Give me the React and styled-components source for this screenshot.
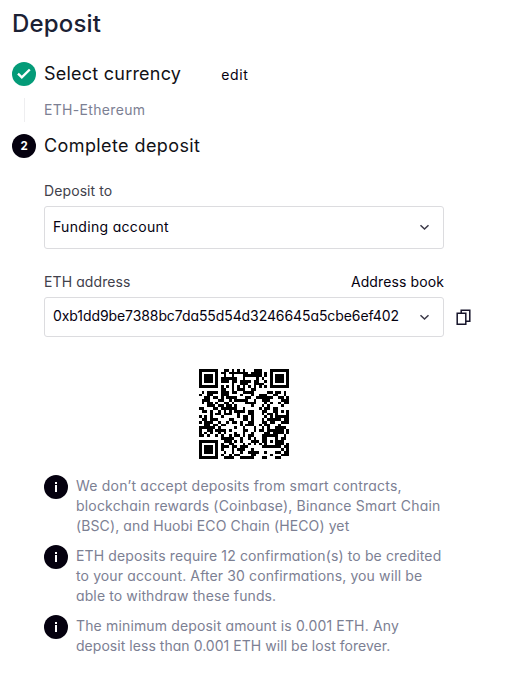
import React from 'react';
import styled, { createGlobalStyle } from 'styled-components';

const ADDRESS = '0xb1dd9be7388bc7da55d54d3246645a5cbe6ef402';

/* ---------- QR encoder: version 4, error correction level Q ---------- */

const SIZE = 33;
const BLOCKS = 2;
const DATA_PER_BLOCK = 24;
const EC_PER_BLOCK = 26;
const FORMAT_LEVEL_Q = 3;
const MASK = 6;

function gfMultiply(a, b) {
  let z = 0;
  for (let i = 7; i >= 0; i--) {
    z = (z << 1) ^ ((z >>> 7) * 0x11d);
    z ^= ((b >>> i) & 1) * a;
  }
  return z;
}

function generator(degree) {
  const poly = new Array(degree).fill(0);
  poly[degree - 1] = 1;
  let root = 1;
  for (let i = 0; i < degree; i++) {
    for (let j = 0; j < degree; j++) {
      poly[j] = gfMultiply(poly[j], root);
      if (j + 1 < degree) poly[j] ^= poly[j + 1];
    }
    root = gfMultiply(root, 2);
  }
  return poly;
}

function codewords(text) {
  const bits = [];
  const put = (v, n) => {
    for (let i = n - 1; i >= 0; i--) bits.push((v >> i) & 1);
  };
  put(4, 4);
  put(text.length, 8);
  for (const c of text) put(c.charCodeAt(0), 8);
  put(0, 4);
  while (bits.length % 8) bits.push(0);

  const data = [];
  for (let i = 0; i < bits.length; i += 8) data.push(parseInt(bits.slice(i, i + 8).join(''), 2));
  for (let pad = 0xec; data.length < BLOCKS * DATA_PER_BLOCK; pad ^= 0xec ^ 0x11) data.push(pad);

  const poly = generator(EC_PER_BLOCK);
  const dataBlocks = [];
  const ecBlocks = [];
  for (let b = 0; b < BLOCKS; b++) {
    const block = data.slice(b * DATA_PER_BLOCK, (b + 1) * DATA_PER_BLOCK);
    const rest = new Array(EC_PER_BLOCK).fill(0);
    for (const x of block) {
      const factor = x ^ rest.shift();
      rest.push(0);
      poly.forEach((c, i) => {
        rest[i] ^= gfMultiply(c, factor);
      });
    }
    dataBlocks.push(block);
    ecBlocks.push(rest);
  }
  const out = [];
  for (let i = 0; i < DATA_PER_BLOCK; i++) dataBlocks.forEach((b) => out.push(b[i]));
  for (let i = 0; i < EC_PER_BLOCK; i++) ecBlocks.forEach((b) => out.push(b[i]));
  return out;
}

function qrMatrix(text) {
  const words = codewords(text);
  const m = Array.from({ length: SIZE }, () => Array(SIZE).fill(0));
  const fixed = Array.from({ length: SIZE }, () => Array(SIZE).fill(false));
  const set = (x, y, v) => {
    if (x < 0 || y < 0 || x >= SIZE || y >= SIZE) return;
    m[y][x] = v ? 1 : 0;
    fixed[y][x] = true;
  };

  for (let i = 0; i < SIZE; i++) {
    set(6, i, i % 2 === 0);
    set(i, 6, i % 2 === 0);
  }
  for (const [cx, cy] of [[3, 3], [SIZE - 4, 3], [3, SIZE - 4]]) {
    for (let a = -4; a <= 4; a++) {
      for (let b = -4; b <= 4; b++) {
        const d = Math.max(Math.abs(a), Math.abs(b));
        set(cx + a, cy + b, d !== 2 && d !== 4);
      }
    }
  }
  for (let a = -2; a <= 2; a++) {
    for (let b = -2; b <= 2; b++) set(26 + a, 26 + b, Math.max(Math.abs(a), Math.abs(b)) !== 1);
  }

  const info = (FORMAT_LEVEL_Q << 3) | MASK;
  let rem = info;
  for (let i = 0; i < 10; i++) rem = (rem << 1) ^ ((rem >>> 9) * 0x537);
  const format = ((info << 10) | rem) ^ 0x5412;
  const bit = (i) => (format >>> i) & 1;
  for (let i = 0; i <= 5; i++) set(8, i, bit(i));
  set(8, 7, bit(6));
  set(8, 8, bit(7));
  set(7, 8, bit(8));
  for (let i = 9; i < 15; i++) set(14 - i, 8, bit(i));
  for (let i = 0; i < 8; i++) set(SIZE - 1 - i, 8, bit(i));
  for (let i = 8; i < 15; i++) set(8, SIZE - 15 + i, bit(i));
  set(8, SIZE - 8, 1);

  let k = 0;
  for (let right = SIZE - 1; right >= 1; right -= 2) {
    if (right === 6) right = 5;
    for (let v = 0; v < SIZE; v++) {
      for (let j = 0; j < 2; j++) {
        const x = right - j;
        const y = ((right + 1) & 2) === 0 ? SIZE - 1 - v : v;
        if (!fixed[y][x] && k < words.length * 8) {
          m[y][x] = (words[k >>> 3] >>> (7 - (k & 7))) & 1;
          k++;
        }
      }
    }
  }
  for (let y = 0; y < SIZE; y++) {
    for (let x = 0; x < SIZE; x++) {
      if (!fixed[y][x] && (((x * y) % 2) + ((x * y) % 3)) % 2 === 0) m[y][x] ^= 1;
    }
  }
  return m;
}

/* ---------- Styles ---------- */

const GlobalStyle = createGlobalStyle`
  *, *::before, *::after { box-sizing: border-box; }
  body {
    margin: 0;
    background: #fff;
    color: #05010f;
    font: 400 14px/20px Inter, "Open Sans", sans-serif;
    font-feature-settings: "cv11" 1;
  }
`;

const Page = styled.main`
  width: 512px;
  height: 682px;
  padding: 8px 0 0 12px;
  overflow: hidden;
  background: #fff;
`;

const Title = styled.h1`
  margin: 0;
  color: #1b2134;
  font-size: 24px;
  font-weight: 500;
  line-height: 32px;
  letter-spacing: 0.185px;
`;

const StepHeader = styled.div`
  display: flex;
  align-items: center;
  height: 24px;
  margin-top: ${(p) => p.$gap}px;
`;

const Disc = styled.span`
  display: flex;
  flex: none;
  align-items: center;
  justify-content: center;
  width: 24px;
  height: 24px;
  margin-right: 8px;
  border-radius: 50%;
  background: ${(p) => (p.$done ? '#049b78' : '#05010f')};
  color: #fff;
  font-size: 11.5px;
  font-weight: 700;
`;

const StepTitle = styled.h2`
  margin: 0;
  color: #111116;
  font-size: 18px;
  font-weight: 400;
  line-height: 24px;
  letter-spacing: ${(p) => p.$track}px;
`;

const EditLink = styled.a`
  margin: 2px 0 0 40px;
  letter-spacing: 0.6px;
`;

const StepSummary = styled.div`
  display: flex;
  align-items: center;
  height: 24px;
  margin: 12px 0 0 12px;
  padding-left: 19px;
  border-left: 1px solid #eeeef0;
  color: #7c8093;
  letter-spacing: 0.32px;
`;

const StepBody = styled.section`
  width: 400px;
  margin-left: 32px;
`;

const FieldHeader = styled.div`
  display: flex;
  justify-content: space-between;
  height: 20px;
  margin-top: ${(p) => p.$gap}px;
`;

const Label = styled.label`
  color: #41414b;
  letter-spacing: 0.1px;
`;

const BookLink = styled.a`
  letter-spacing: 0.112px;
`;

const SelectRow = styled.div`
  display: flex;
  align-items: center;
  gap: 12px;
  width: 428px;
  margin-top: 5px;
`;

const Select = styled.div`
  display: flex;
  flex: none;
  align-items: center;
  justify-content: space-between;
  width: 400px;
  height: ${(p) => p.$height}px;
  padding: 0 13px 2px 8px;
  border: 1px solid #dcdcdf;
  border-radius: 3px;
  letter-spacing: ${(p) => p.$track}px;
`;

const Chevron = styled.svg`
  display: block;
  width: 11px;
  height: 7px;
  margin-top: 2px;
`;

const CopyIcon = styled.svg`
  display: block;
  width: 16px;
  height: 16px;
`;

const Qr = styled.svg`
  display: block;
  width: 90px;
  height: 90px;
  margin: 32px 0 0 155px;
`;

const Notes = styled.ul`
  display: grid;
  gap: 10px;
  margin: 17px 0 0;
  padding: 0;
  list-style: none;
`;

const Note = styled.li`
  display: flex;
  align-items: flex-start;
  color: #7c8093;

  ${Disc} { margin-top: -1px; }
`;

const NoteLine = styled.span`
  display: block;
  white-space: nowrap;
  letter-spacing: ${(p) => p.$track}px;
`;

/* ---------- Content ---------- */

const NOTES = [
  [
    ['We don’t accept deposits from smart contracts,', 0.205],
    ['blockchain rewards (Coinbase), Binance Smart Chain', 0.185],
    ['(BSC), and Huobi ECO Chain (HECO) yet', 0.115],
  ],
  [
    ['ETH deposits require 12 confirmation(s) to be credited', 0.13],
    ['to your account. After 30 confirmations, you will be', 0.12],
    ['able to withdraw these funds.', 0.115],
  ],
  [
    ['The minimum deposit amount is 0.001 ETH. Any', 0.15],
    ['deposit less than 0.001 ETH will be lost forever.', 0.04],
  ],
];

function ChevronDown() {
  return (
    <Chevron viewBox="0 0 11 7" fill="none" stroke="#3c3a48" strokeWidth="1.5">
      <path d="M1.5 1.2L5.5 5L9.5 1.2" />
    </Chevron>
  );
}

function QrCode({ value }) {
  const path = qrMatrix(value)
    .flatMap((row, y) => row.map((on, x) => (on ? `M${x} ${y}h1v1h-1z` : '')))
    .join('');
  return (
    <Qr viewBox={`0 0 ${SIZE} ${SIZE}`} shapeRendering="crispEdges">
      <path d={path} fill="#000" />
    </Qr>
  );
}

export default function App() {
  return (
    <>
      <GlobalStyle />
      <Page>
        <Title>Deposit</Title>

        <StepHeader $gap={22}>
          <Disc $done>
            <svg width="14" height="12" viewBox="0 0 14 12" fill="none" stroke="#fff" strokeWidth="2.4">
              <path d="M1 5.7L4.8 9.3L12.8 1.5" />
            </svg>
          </Disc>
          <StepTitle $track={0.23}>Select currency</StepTitle>
          <EditLink>edit</EditLink>
        </StepHeader>
        <StepSummary>ETH-Ethereum</StepSummary>

        <StepHeader $gap={12}>
          <Disc>2</Disc>
          <StepTitle $track={0.404}>Complete deposit</StepTitle>
        </StepHeader>

        <StepBody>
          <FieldHeader $gap={23}>
            <Label>Deposit to</Label>
          </FieldHeader>
          <SelectRow>
            <Select $height={43} $track={0.32}>
              Funding account
              <ChevronDown />
            </Select>
          </SelectRow>

          <FieldHeader $gap={23}>
            <Label>ETH address</Label>
            <BookLink>Address book</BookLink>
          </FieldHeader>
          <SelectRow>
            <Select $height={40} $track={-0.085}>
              {ADDRESS}
              <ChevronDown />
            </Select>
            <CopyIcon viewBox="0 0 16 16" fill="none" stroke="#16142a" strokeWidth="1.5">
              <path d="M1.2 4.2H9.8V15.2H1.2Z" />
              <path d="M5.2 4V1.2H13.8V12.2H10" />
            </CopyIcon>
          </SelectRow>

          <QrCode value={ADDRESS} />

          <Notes>
            {NOTES.map((lines) => (
              <Note key={lines[0][0]}>
                <Disc>
                  <svg width="4" height="12" viewBox="0 0 4 12" fill="#fff">
                    <rect x="1" y="1" width="2" height="2" />
                    <rect x="1" y="4" width="2" height="7" />
                  </svg>
                </Disc>
                <div>
                  {lines.map(([text, track]) => (
                    <NoteLine key={text} $track={track}>{text}</NoteLine>
                  ))}
                </div>
              </Note>
            ))}
          </Notes>
        </StepBody>
      </Page>
    </>
  );
}
